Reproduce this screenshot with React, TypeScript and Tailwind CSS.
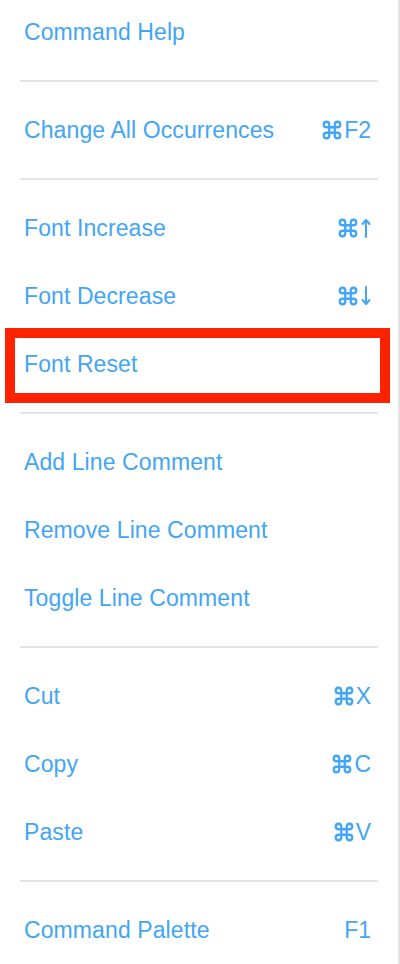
import React from "react";
import { Command } from "lucide-react";

type Key = { cmd?: boolean; text?: string; arrow?: "up" | "down" };
type Item = { label: string; key?: Key; highlight?: boolean };

const groups: Item[][] = [
  [{ label: "Command Help" }],
  [{ label: "Change All Occurrences", key: { cmd: true, text: "F2" } }],
  [
    { label: "Font Increase", key: { cmd: true, arrow: "up" } },
    { label: "Font Decrease", key: { cmd: true, arrow: "down" } },
    { label: "Font Reset", highlight: true },
  ],
  [
    { label: "Add Line Comment" },
    { label: "Remove Line Comment" },
    { label: "Toggle Line Comment" },
  ],
  [
    { label: "Cut", key: { cmd: true, text: "X" } },
    { label: "Copy", key: { cmd: true, text: "C" } },
    { label: "Paste", key: { cmd: true, text: "V" } },
  ],
  [{ label: "Command Palette", key: { text: "F1" } }],
];

function Arrow({ dir }: { dir: "up" | "down" }) {
  return (
    <svg width="10" height="20" viewBox="0 0 10 20" className="ml-[1px]" fill="none" stroke="currentColor" strokeWidth="2" strokeLinecap="round" strokeLinejoin="round">
      {dir === "up" ? (
        <>
          <path d="M5 2.5V19" />
          <path d="M1.5 6L5 2L8.5 6" />
        </>
      ) : (
        <>
          <path d="M5 1V17.5" />
          <path d="M1.5 14L5 18L8.5 14" />
        </>
      )}
    </svg>
  );
}

function Shortcut({ k }: { k: Key }) {
  return (
    <span className="flex items-center">
      {k.cmd && <Command size={22} strokeWidth={2.5} className="mr-[1px]" />}
      {k.text && <span>{k.text}</span>}
      {k.arrow && <Arrow dir={k.arrow} />}
    </span>
  );
}

function Row({ item }: { item: Item }) {
  return (
    <div className="relative flex h-[68px] items-center justify-between pl-[24px] pr-[27px]">
      <span className="tracking-[0.1px]">{item.label}</span>
      {item.key && <Shortcut k={item.key} />}
      {item.highlight && (
        <div className="pointer-events-none absolute left-[5px] right-[8px] top-[-2px] bottom-[-5px] border-[10px] border-[#ff2200]" />
      )}
    </div>
  );
}

export default function App() {
  return (
    <div
      className="h-[964px] w-[400px] overflow-hidden border-r-2 border-[#e2e2e2] bg-white text-[23px] text-[#42a5f5]"
      style={{ fontFamily: '"Liberation Sans", Arial, sans-serif' }}
    >
      <div className="mt-[-2px] flex flex-col">
        {groups.map((g, gi) => (
          <React.Fragment key={gi}>
            {gi > 0 && (
              <div className="flex h-[30px] items-center pl-[20px] pr-[20px]">
                <div className="h-[2px] w-full bg-[#e4e4e4]" />
              </div>
            )}
            {g.map((it, ii) => (
              <Row key={ii} item={it} />
            ))}
          </React.Fragment>
        ))}
      </div>
    </div>
  );
}
